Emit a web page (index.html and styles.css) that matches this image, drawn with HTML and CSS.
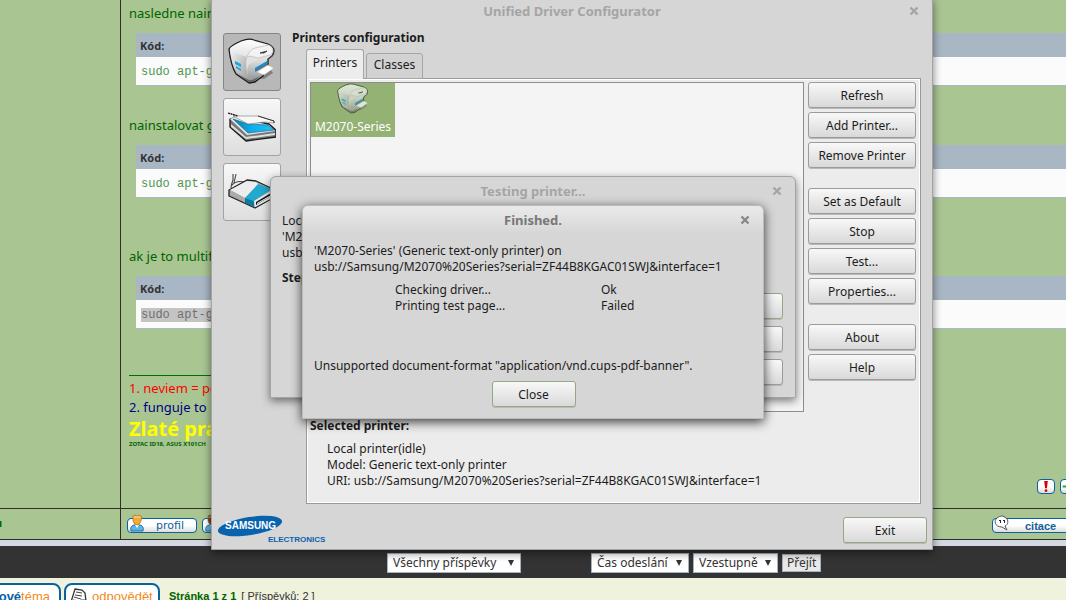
FILE: index.html
```html
<!DOCTYPE html>
<html lang="cs">
<head>
<meta charset="utf-8">
<title>Unified Driver Configurator</title>
<link rel="stylesheet" href="styles.css">
</head>
<body>
<svg width="0" height="0" class="defs" aria-hidden="true">
  <defs>
    <linearGradient id="shell" x1="0" y1="0" x2="0" y2="1"><stop offset="0" stop-color="#fff"/><stop offset=".5" stop-color="#dcdcdc"/><stop offset="1" stop-color="#8c8c8c"/></linearGradient>
    <linearGradient id="side" x1="0" y1="0" x2="1" y2="1"><stop offset="0" stop-color="#f4f4f4"/><stop offset="1" stop-color="#9c9c9c"/></linearGradient>
    <linearGradient id="blue" x1="0" y1="0" x2="1" y2="0"><stop offset="0" stop-color="#0a7cb4"/><stop offset=".5" stop-color="#12b0ea"/><stop offset="1" stop-color="#20bff4"/></linearGradient>
  </defs>
  <symbol id="printer" viewBox="0 0 48 48">
    <path d="M28 40l8 1 9-6-4-6z" fill="#808080"/>
    <path d="M1 11q1-3 12-8 8-3 13-1l14 4q5 2 6 6 0 4-2 6l-4 3v6l-5 11-8 6-6 1-13-9Q3 28 1 11z" fill="url(#shell)" stroke="#1c1c1c" stroke-width="1.3" stroke-linejoin="round"/>
    <path d="M2 12q8 5 17 7-2 12 2 24L9 34Q4 27 2 12z" fill="url(#side)"/>
    <path d="M19 20q3-9 7-10l14-3q5 2 5 5 0 4-3 5l-13 4-9 6q-2 8 1 16-4-12-2-23z" fill="#e2e2e2"/>
    <path d="M19 19q3-8 8-9l14-3q4 2 4 6-1 3-3 4l-12 3-8-2z" fill="#f3f3f3" stroke="#b5b5b5" stroke-width=".6"/>
    <path d="M32 15l7-2-3 2z" stroke="#444" stroke-width=".9"/>
    <path d="M40 21l4-3 2-5" fill="none" stroke="#555" stroke-width=".9"/>
    <path d="M7 23l6 3v3l-6-3zM8 28l5 3v2l-5-3z" fill="#14a9df"/>
    <path d="M27 30l12-7v4l-12 7z" fill="#0d94cf"/>
    <path d="M28 32l11-6v1l-11 6z" fill="#934c60"/>
    <path d="M29 34l11-7 6 3-10 7-5-2z" fill="#fff" stroke="#aaa" stroke-width=".5"/>
    <path d="M9 36l12 8 6-1 5-5-8 4h-3z" fill="#444" opacity=".6"/>
  </symbol>
  <symbol id="scanner" viewBox="0 0 48 48">
    <path d="M2 16v8l16 14 30-4v-7l-7-6-36-6z" fill="#777" stroke="#1b1b1b" stroke-width="1.3" stroke-linejoin="round"/>
    <path d="M2 16l17 16 28-4-6-6L6 14z" fill="#e4e4e4"/>
    <path d="M3 21l15 13 29-4v2l-29 4L3 24z" fill="#dedede"/>
    <path d="M5 16l15 14 26-3-6-5-20-1z" fill="url(#blue)" stroke="#086286" stroke-width=".6"/>
    <path d="M5 13h25l16 5v2l-9-1-17 2z" fill="#f8f8f8" stroke="#777" stroke-width=".6"/>
    <path d="M30 13l16 5v2" fill="none" stroke="#222" stroke-width=".9"/>
    <path d="M0 10l10 3" stroke="#111" stroke-width="1.3" stroke-dasharray="2 .6"/>
  </symbol>
  <symbol id="modem" viewBox="0 0 48 48">
    <path d="M5 6v6q-2 5-2 8M8 6l-2 9M3 18q5-6 13-4" fill="none" stroke="#444" stroke-width="1.1"/>
    <path d="M1 22l18-10 9 1 17 8v9L27 40 1 28z" fill="#a8a8a8" stroke="#222" stroke-width="1.3" stroke-linejoin="round"/>
    <path d="M2 22l17-9 9 1 3 3-14 13z" fill="#ededed"/>
    <path d="M2 22l15 8v4L2 27z" fill="#aaa"/>
    <path d="M30 16l14 5-18 12-9-3z" fill="#23a8ce"/>
    <path d="M17 30l9 3v6l-9-4z" fill="#087ba2"/>
    <path d="M26 33l18-11v8l-17 9z" fill="#e9e9e9"/>
    <path d="M28 34l15-9v3l-15 9z" fill="#111"/>
    <path d="M29 35l14-8v1l-14 8z" fill="#fff"/>
  </symbol>
  <symbol id="person" viewBox="0 0 16 18">
    <path d="M2 17c-1-4 1-6 4-6h4c3 0 5 2 4 6z" fill="#58b6ea" stroke="#276b98"/>
    <path d="M6 11l2 3 2-3z" fill="#fff"/>
    <path d="M4 2q2-2 4 0 3-2 5 1l-1 4q-1 4-4 4T4 7z" fill="currentColor" stroke="#9b691c" stroke-width=".6"/>
    <path d="M5 2h6l1 2H4z" fill="#fff" opacity=".3"/>
  </symbol>
  <symbol id="cross" viewBox="0 0 10 10"><path d="M1.500 1.500l7 7m0-7l-7 7" stroke="currentColor" stroke-width="2.400"/></symbol>
</svg>

<main class="forum">
  <article class="post">
    <div class="author"></div>
    <div class="message">
      <p>nasledne nainst</p>
      <div class="code"><div class="code-title">Kód:</div><pre>sudo apt-get</pre></div>
      <p class="second">nainstalovat gd</p>
      <div class="code"><div class="code-title">Kód:</div><pre>sudo apt-get</pre></div>
      <p class="third">ak je to multif</p>
      <div class="code"><div class="code-title">Kód:</div><pre><mark>sudo apt-get</mark></pre></div>
      <div class="signature">
        <p class="red">1. neviem = po</p>
        <p class="navy">2. funguje to</p>
        <p class="gold">Zlaté prav</p>
        <p class="tiny">ZOTAC ID18, ASUS X101CH</p>
      </div>
      <div class="flags">
        <button class="flag" aria-label="Nahlásit"><svg viewBox="0 0 16 12"><path d="M6 0h4L9 8H7z" fill="#d80000"/><circle cx="8" cy="10.500" r="1.500" fill="#d80000"/></svg></button>
        <button class="flag" aria-label="Poděkovat"><svg viewBox="0 0 16 12"><path d="M1 6h13M8 1v10" stroke="#18b33b" stroke-width="2"/></svg></button>
      </div>
    </div>
    <div class="author-foot">u</div>
    <div class="actions">
      <a class="pill" href="#"><svg class="yellow"><use href="#person"/></svg>profil</a>
      <a class="pill" href="#" aria-label="Soukromá zpráva"><svg class="brown"><use href="#person"/></svg></a>
      <a class="pill quote" href="#"><svg viewBox="0 0 16 18"><path d="M3 4q5-4 9 0c3 2 2 7-1 8l2 4-5-3c-8 0-8-7-5-9z" fill="#fff" stroke="#555"/><path d="M5 6h2v3H6V7H5zM9 6h2v3h-1V7H9z" fill="#224"/></svg>citace</a>
    </div>
  </article>
  <form class="sorting">
    <span class="select wide"><select aria-label="Zobrazit"><option>Všechny příspěvky</option></select><svg viewBox="0 0 6 6"><path d="M0 0h6L3 6z"/></svg></span>
    <span class="select time"><select aria-label="Seřadit podle"><option>Čas odeslání</option></select><svg viewBox="0 0 6 6"><path d="M0 0h6L3 6z"/></svg></span>
    <span class="select order"><select aria-label="Pořadí"><option>Vzestupně</option></select><svg viewBox="0 0 6 6"><path d="M0 0h6L3 6z"/></svg></span>
    <button type="button">Přejít</button>
  </form>
  <nav class="topic">
    <a class="topic-button new" href="#"><b>nové</b>téma</a>
    <a class="topic-button" href="#"><svg viewBox="0 0 18 18"><path d="M6 1l7 1 3 3 1 8-5 4-10-3z" fill="#fff" stroke="#333" stroke-width="1.300"/><path d="M7 4l6 1M6 7l7 1M5 9l7 2M4 12l6 1M13 16l-1-4 5 0" fill="none" stroke="#444"/></svg>odpovědět</a>
    <strong>Stránka 1 z 1</strong>
    <span>[ Příspěvků: 2 ]</span>
  </nav>
</main>

<section class="window main-window">
  <header class="titlebar"><h1>Unified Driver Configurator</h1><button class="close" aria-label="Close window"><svg><use href="#cross"/></svg></button></header>
  <div class="workspace">
    <nav class="tools">
      <button class="tool active" aria-label="Printers"><svg><use href="#printer"/></svg></button>
      <button class="tool" aria-label="Scanners"><svg><use href="#scanner"/></svg></button>
      <button class="tool" aria-label="Ports"><svg><use href="#modem"/></svg></button>
    </nav>
    <div class="config">
      <h2>Printers configuration</h2>
      <div class="tabs"><button class="tab current">Printers</button><button class="tab">Classes</button></div>
      <div class="panel">
        <div class="left">
          <div class="list"><button class="device"><svg><use href="#printer"/></svg>M2070-Series</button></div>
          <h3>Selected printer:</h3>
          <div class="details"><p>Local printer(idle)</p><p>Model: Generic text-only printer</p><p>URI: usb://Samsung/M2070%20Series?serial=ZF44B8KGAC01SWJ&amp;interface=1</p></div>
        </div>
        <div class="commands">
          <div class="group"><button class="btn">Refresh</button><button class="btn">Add Printer...</button><button class="btn">Remove Printer</button></div>
          <div class="group"><button class="btn">Set as Default</button><button class="btn">Stop</button><button class="btn">Test...</button><button class="btn">Properties...</button></div>
          <div class="group"><button class="btn">About</button><button class="btn">Help</button></div>
        </div>
      </div>
    </div>
  </div>
  <footer class="main-foot">
    <svg class="logo" viewBox="0 0 112 32" role="img" aria-label="Samsung Electronics">
      <ellipse cx="34" cy="14" rx="32.500" ry="9" transform="rotate(-9 34 14)" fill="#0862ae"/>
      <text x="9" y="17" class="logo-name">SAMSUNG</text>
      <text x="52" y="30" class="logo-sub">ELECTRONICS</text>
    </svg>
    <button class="btn default">Exit</button>
  </footer>
</section>

<section class="window test-window">
  <header class="titlebar"><h1>Testing printer...</h1><button class="close" aria-label="Close window"><svg><use href="#cross"/></svg></button></header>
  <div class="test-body">
    <div><p>Local</p><p>'M2070</p><p>usb://</p><p class="step">Step</p></div>
    <div class="test-buttons"><button class="btn default" aria-label="Continue"></button><button class="btn" aria-label="Back"></button><button class="btn" aria-label="Cancel"></button></div>
  </div>
</section>

<section class="window done-window" role="dialog" aria-labelledby="done">
  <header class="titlebar"><h1 id="done">Finished.</h1><button class="close" aria-label="Close window"><svg><use href="#cross"/></svg></button></header>
  <div class="done-body">
    <p>'M2070-Series' (Generic text-only printer) on</p>
    <p>usb://Samsung/M2070%20Series?serial=ZF44B8KGAC01SWJ&amp;interface=1</p>
    <dl><dt>Checking driver...</dt><dd>Ok</dd><dt>Printing test page...</dt><dd>Failed</dd></dl>
    <p>Unsupported document-format "application/vnd.cups-pdf-banner".</p>
    <button class="btn default">Close</button>
  </div>
</section>
</body>
</html>
```

FILE: styles.css
```css
* { box-sizing: border-box; }
body { margin: 0; min-height: 100vh; overflow: hidden; position: relative; background: #eff2dd; font: 12px/16px "Noto Sans", sans-serif; color: #1c1c1c; }
p, h1, h2, h3, dl, dd, pre { margin: 0; }
button, select { font: inherit; color: inherit; }
a { text-decoration: none; }
svg { display: block; }
.defs { position: absolute; }

/* forum page */
.forum { width: calc(100% + 50px); }
.post { display: grid; grid-template-columns: 121px 1fr; background: #a9c592; border-bottom: 6px solid #d4d8e2; }
.author, .author-foot { border-right: 1px solid #2e2e2e; }
.message { padding: 4px 0 14px 8px; font-size: 13px; line-height: 18px; color: #006400; }
.message .second { margin-top: 30px; }
.message .third { margin-top: 49px; }
.code { margin: 11px 0 0 7px; background: #fbfbfb; border-bottom: 1px solid #a9b8c2; }
.code-title { height: 24px; padding: 0 4px; background: #a9b6c4; font: bold 11px/26px "Noto Sans", sans-serif; color: #333; }
.code pre { height: 28px; padding: 8px 5px; font: 12px/14px "Liberation Mono", monospace; color: #4f9650; }
.code mark { background: #c4c4c4; color: #707070; }
.signature { width: 120px; margin-top: 46px; padding-top: 3px; border-top: 1px solid #007000; line-height: 19px; white-space: nowrap; }
.red { color: #f00; }
.navy { color: #000080; }
.gold { color: #ff0; font-size: 20px; font-weight: bold; line-height: 23px; }
.tiny { font-size: 6px; font-weight: bold; line-height: 9px; }
.flags { display: flex; justify-content: flex-end; gap: 5px; margin-top: 30px; padding-right: 38px; }
.flag { width: 18px; height: 15px; padding: 1px 0; background: linear-gradient(#fff 50%, #ddd); border: 1px solid #0b62a0; border-radius: 4px; }
.flag svg { width: 16px; height: 11px; }
.author-foot, .actions { border-top: 1px solid #2e2e2e; border-bottom: 1px solid #2e2e2e; }
.author-foot { margin-left: -5px; color: #006400; font-size: 11px; font-weight: bold; line-height: 28px; }
.actions { display: flex; gap: 5px; height: 32px; padding: 9px 44px 0 6px; }
.pill { display: flex; gap: 11px; width: 70px; height: 15px; padding-left: 1px; background: linear-gradient(#fff 50%, #ddd); border: 1px solid #0b62a0; border-radius: 4px; font: 11px/14px "DejaVu Sans", sans-serif; color: #14609a; }
.pill svg { width: 16px; height: 18px; margin-top: -5px; }
.yellow { color: #f5a832; }
.brown { color: #75462c; }
.quote { width: 80px; margin-left: auto; gap: 15px; font: bold 11px/14px "Liberation Sans", sans-serif; }
.sorting { display: flex; align-items: center; height: 32px; padding: 2px 0 0 387px; background: #333; }
.select { position: relative; }
.select select { appearance: none; width: 100%; height: 20px; padding: 0 5px; background: #fff; border: 1px solid #a5b2c0; border-radius: 0; font: 12px/18px "Noto Sans", sans-serif; color: #333; }
.select svg { position: absolute; right: 7px; top: 7px; width: 6px; height: 6px; fill: #333; pointer-events: none; }
.wide { width: 134px; margin-right: 70px; }
.time { width: 98px; margin-right: 4px; }
.order { width: 85px; margin-right: 4px; }
.sorting button { height: 18px; padding: 0 4px; background: #e9e9e9; border: 1px solid #a5b2c0; line-height: 16px; color: #333; }
.topic { display: flex; align-items: flex-start; gap: 5px; height: 40px; padding-top: 5px; font: 11px/26px "Liberation Sans", sans-serif; color: #333; }
.topic-button { display: flex; width: 96px; height: 30px; margin-right: 4px; border: 2px solid #0b62a0; border-radius: 8px; background: #fff; font: 13px/24px "Liberation Sans", sans-serif; color: #f38a1e; }
.topic-button svg { width: 18px; height: 18px; margin: 3px 5px 0 3px; }
.topic-button b { color: #0b62a0; }
.topic-button.new { justify-content: flex-end; width: 72px; margin: 0 -2px 0 -11px; padding-right: 9px; }
.topic strong { color: #006400; }

/* desktop windows */
.window { position: absolute; background: #d6d6d6; border: 1px solid #a4a4a4; border-radius: 6px 6px 0 0; box-shadow: 0 3px 9px rgba(0,0,0,.5); }
.titlebar { display: grid; grid-template-columns: 23px 1fr 23px; align-items: center; height: 28px; border-radius: 5px 5px 0 0; color: #a5a5a5; }
.titlebar h1 { grid-column: 2; font-size: 13px; line-height: 18px; text-align: center; }
.close { width: 10px; height: 10px; padding: 0; background: none; border: 0; }
.close svg { width: 10px; height: 10px; color: #a5a5a5; }
.btn { display: block; width: 100%; height: 26px; padding: 1px 4px 0; background: linear-gradient(#f8f8f8, #d9d9d9); border: 1px solid #9b9b9b; border-radius: 3px; box-shadow: 0 1px 0 #b9b9b9; line-height: 23px; }
.btn.default { border-color: #95a886; }

.main-window { left: 211px; top: -4px; width: 722px; padding-bottom: 5px; }
.workspace { display: grid; grid-template-columns: 58px 1fr; gap: 11px; padding: 3px 11px 0; }
.tools { display: flex; flex-direction: column; gap: 7px; padding-top: 5px; }
.tool { width: 58px; height: 58px; padding: 4px; background: linear-gradient(#f7f7f7, #dedede); border: 1px solid #a2a2a2; border-radius: 3px; }
.tool svg { width: 48px; height: 48px; }
.tool.active { background: #b8b8b8; border-color: #858585; }
.config h2, .left h3 { font-size: 12px; line-height: 16px; }
.config h2 { padding-top: 2px; }
.tabs { display: flex; align-items: flex-end; gap: 2px; margin: 3px 0 -1px 14px; }
.tab { width: 57px; height: 26px; padding: 0 0 3px; background: #d2d2d2; border: 1px solid #a5a5a5; border-radius: 3px 3px 0 0; }
.tab.current { position: relative; width: 58px; height: 30px; padding-bottom: 4px; background: #ededed; border-bottom: 0; }
.panel { display: flex; gap: 4px; min-height: 426px; margin-left: 14px; padding: 3px 4px 3px 3px; background: #ececec; border: 1px solid #999; box-shadow: inset 0 0 0 1px #fff; }
.left { flex: 1; }
.list { height: 330px; background: #f4f4f4; border: 1px solid #8d8d8d; }
.device { display: flex; flex-direction: column; gap: 2px; align-items: center; width: 84px; padding: 0; background: #93b274; border: 0; color: #fff; line-height: 20px; }
.device svg { width: 32px; height: 32px; opacity: .7; }
.left h3 { margin: 6px 0 7px; }
.details { padding-left: 17px; }
.commands { display: flex; flex-direction: column; gap: 20px; width: 108px; }
.group { display: flex; flex-direction: column; gap: 4px; }
.main-foot { display: flex; justify-content: space-between; align-items: center; padding: 8px 5px 0 4px; }
.main-foot .btn { width: 84px; margin-top: 4px; }
.logo { width: 112px; height: 32px; }
.logo-name { font: bold 10px "Liberation Sans", sans-serif; fill: #fff; }
.logo-sub { font: bold 8px "Liberation Sans", sans-serif; fill: #0862ae; }

.test-window { left: 270px; top: 176px; width: 526px; padding-bottom: 12px; }
.test-body { display: flex; justify-content: space-between; padding: 8px 12px 0 11px; }
.test-body .step { margin-top: 9px; font-weight: bold; }
.test-buttons { display: flex; flex-direction: column; gap: 7px; width: 108px; padding-top: 80px; }

.done-window { left: 302px; top: 205px; width: 462px; padding-bottom: 11px; box-shadow: 0 3px 11px rgba(0,0,0,.75); border-color: #bbb; }
.done-window .titlebar { background: linear-gradient(#eaeaea, #d6d6d6); color: #777; }
.done-window .close svg { color: #888; }
.done-body { padding: 9px 10px 0 11px; }
.done-body dl { display: grid; grid-template-columns: 206px 1fr; margin: 7px 0 44px 81px; }
.done-body .btn { width: 84px; margin: 7px auto 0; }
```
